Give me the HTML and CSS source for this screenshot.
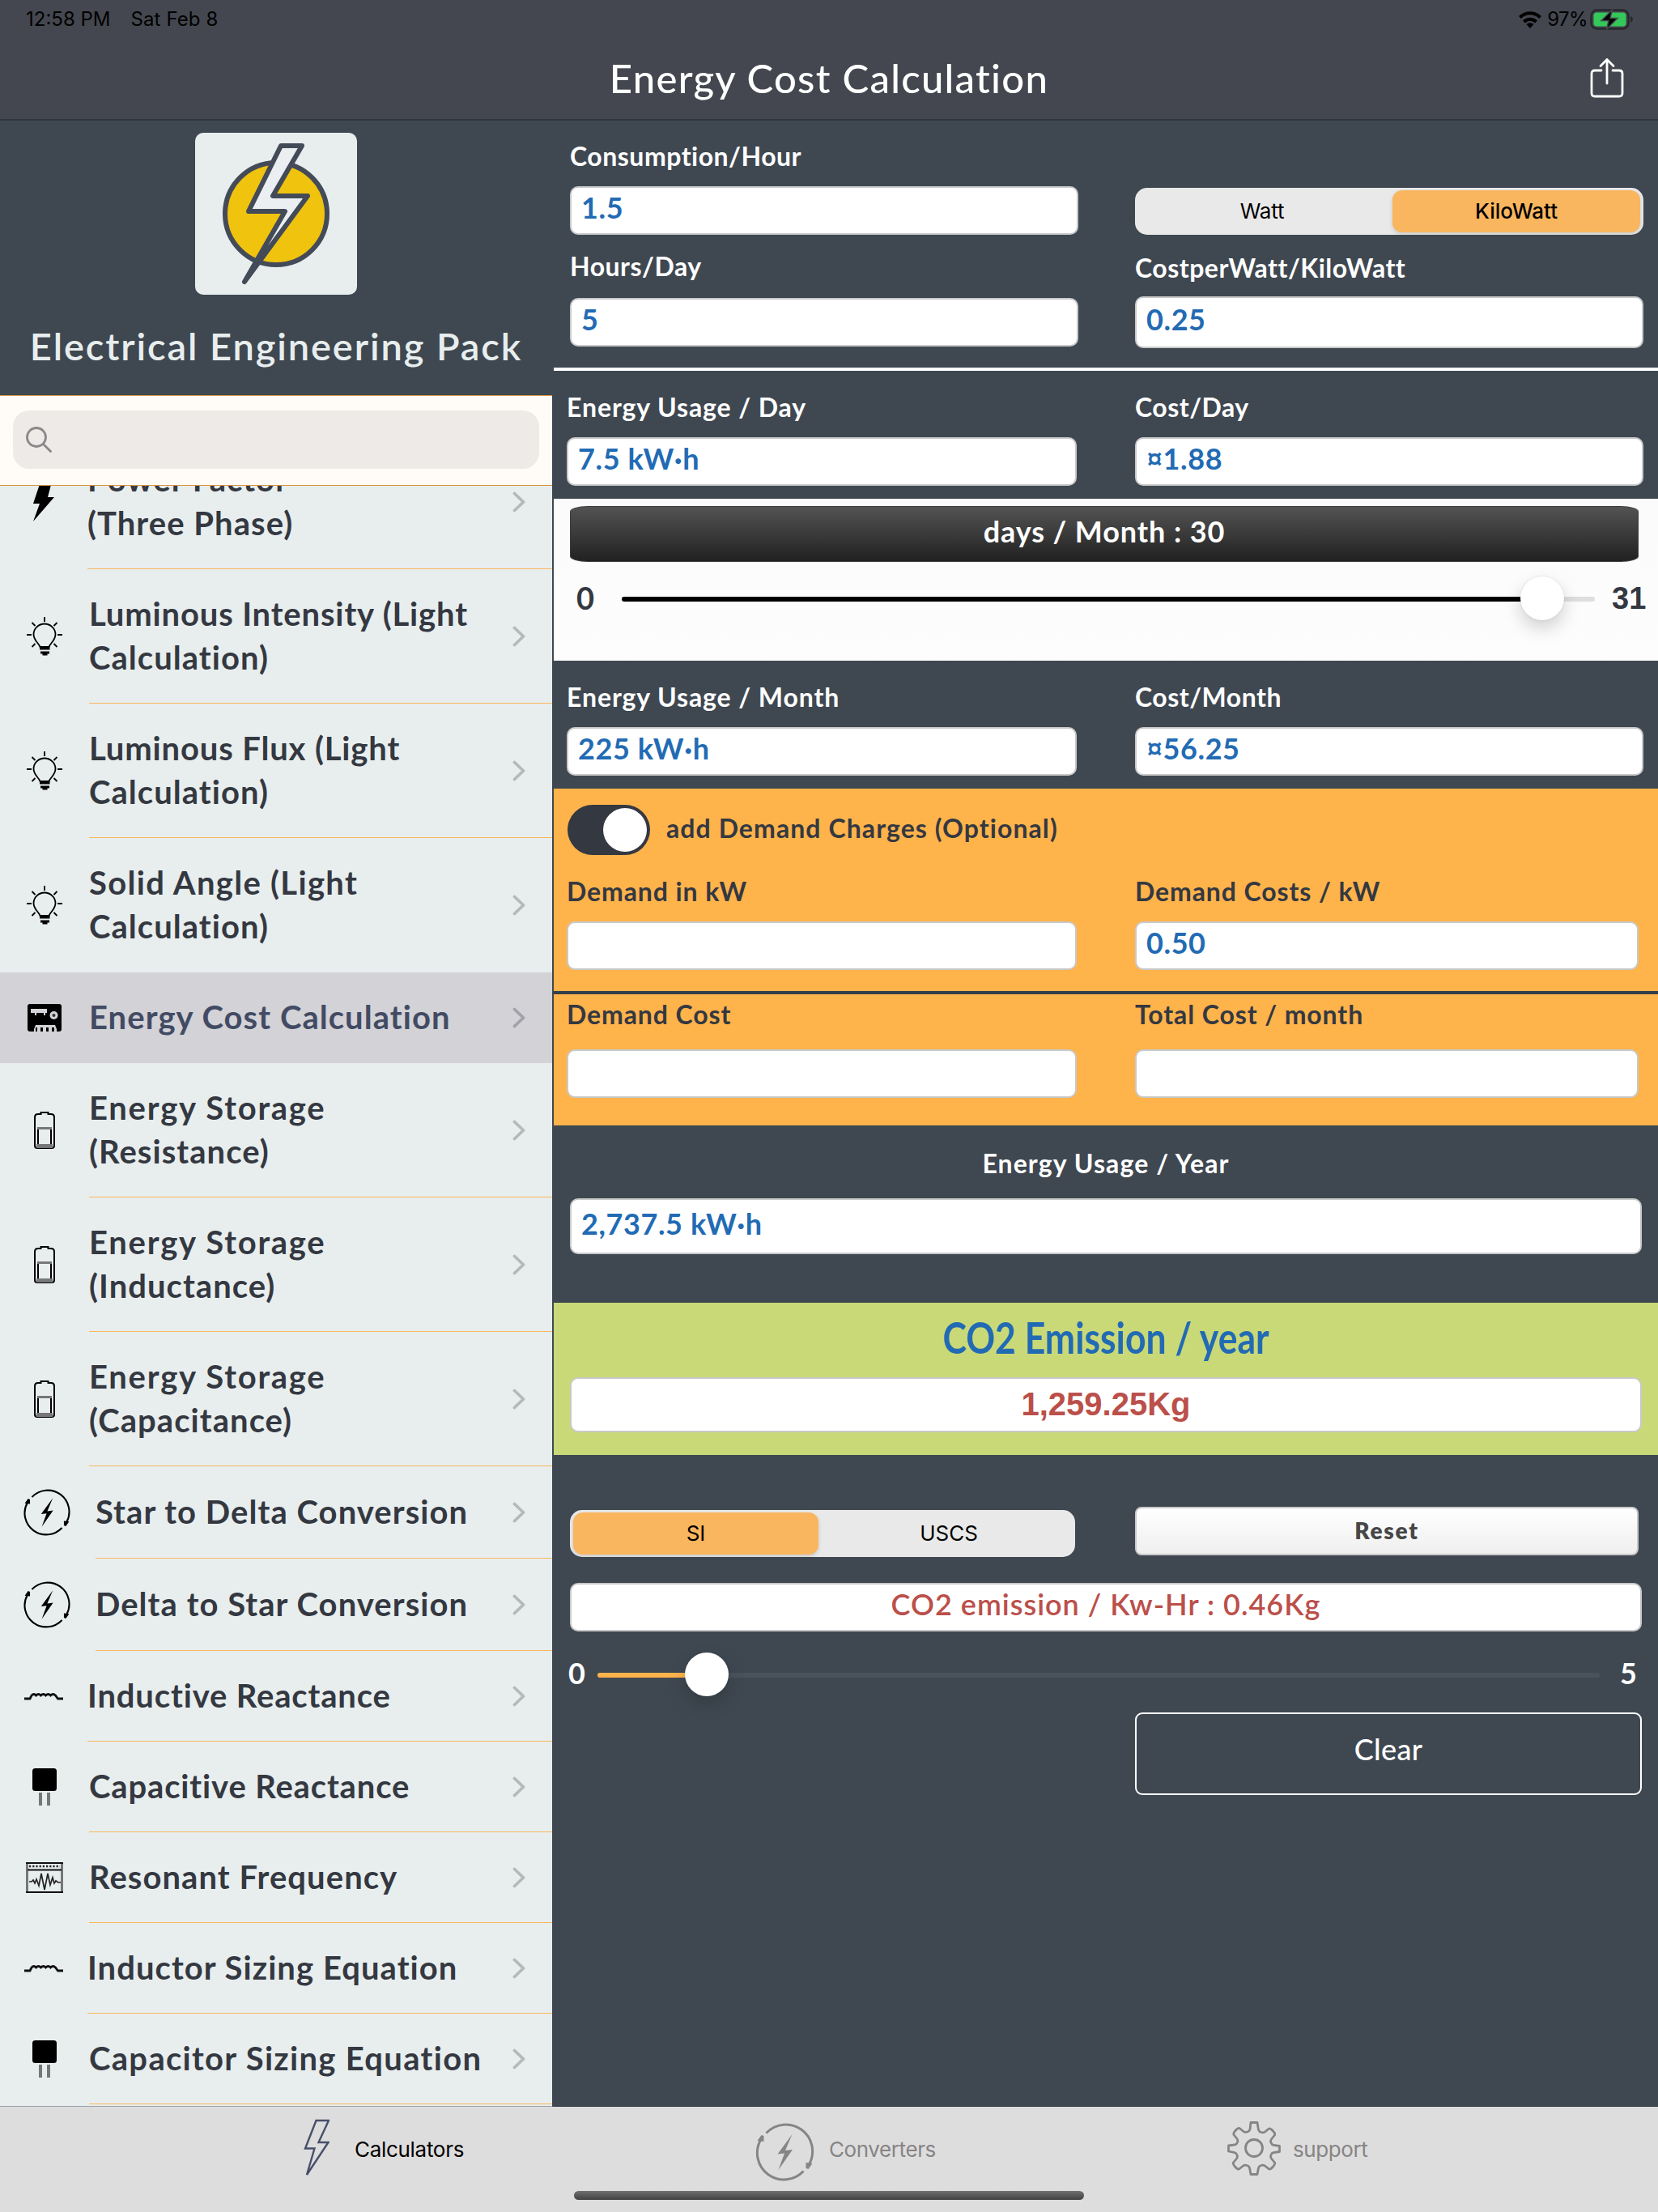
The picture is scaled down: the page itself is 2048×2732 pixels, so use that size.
FILE: index.html
```html
<!DOCTYPE html>
<html lang="en">
<head>
<meta charset="utf-8">
<title>Energy Cost Calculation</title>
<link rel="stylesheet" href="styles.css">
</head>
<body>
<svg class="defs" aria-hidden="true">
  <symbol id="bulb" viewBox="0 0 60 60">
    <g fill="none" stroke="#000" stroke-width="1.8">
      <path d="M30 6v6M8 28h6M46 28h6M14.5 13l4 4M45.500 13l-4 4M14.500 43l4-4M45.500 43l-4-4"/>
      <path d="M24.500 43c-1-4-8-8-8-15.500a13.500 13 0 0 1 27 0c0 7.500-7 11.500-8 15.500z"/>
    </g>
    <path d="M24 42.500h12.500v4H24zM25 48.500h11v3h-2.500v2h-6v-2H25z"/>
  </symbol>
  <symbol id="battery" viewBox="0 0 60 60">
    <path d="M18 14q0-4 4-4h3.500V8h9v2H38q4 0 4 4v35q0 3-3 3H21q-3 0-3-3z" fill="none" stroke="#000" stroke-width="2"/>
    <path d="M22 48V27h16v21" fill="none" stroke="#000" stroke-width="2"/>
    <path d="M21 26h18v3H21zM20 47h20v5H20z" fill="#777"/>
  </symbol>
  <symbol id="meter" viewBox="0 0 60 60">
    <rect x="9" y="13" width="42" height="34" rx="3"/>
    <path d="M13 19h20v5h-2v3h-2v-3h-9v3h-2v-3h-5z" fill="#d4d3d8"/>
    <circle cx="41.500" cy="27" r="5" fill="#d4d3d8"/><circle cx="41.500" cy="27" r="2" fill="#333"/>
    <path d="M17 47v-3l2-5h24l2 5v3h-3v-5h-3v5h-4v-5h-3v5h-4v-5h-3v5h-4v-5h-2v5z" fill="#d4d3d8"/>
  </symbol>
  <symbol id="cycle" viewBox="0 0 72 72">
    <g fill="none" stroke="currentColor" stroke-width="var(--w)">
      <path d="M13 12.500A33 33 0 0 1 66 51"/>
      <path d="M59 59.500A33 33 0 0 1 6 21"/>
    </g>
    <path d="M2 22l5-7 3 1v7zM70 50l-5 7-3-1v-7z" fill="currentColor"/>
    <path d="M45 14L27 38.500l8.500-1L28 58l17.500-25-9 1z" fill="currentColor"/>
  </symbol>
  <symbol id="coil" viewBox="0 0 60 60">
    <path d="M5 33h7l2-4q3-3 5.500 0 3-3 6 0 3-3 6 0 3-3 6 0 3-3 6 0l3 4H53" fill="none" stroke="#111" stroke-width="2.800"/>
  </symbol>
  <symbol id="capacitor" viewBox="0 0 60 60">
    <rect x="15" y="7" width="30" height="28" rx="3.500"/>
    <path d="M23 37h4v16h-4zM33 37h4v16h-4z" fill="#777"/>
  </symbol>
  <symbol id="scope" viewBox="0 0 60 60">
    <path d="M8.500 11v38M51.500 11v38" stroke="#777" stroke-width="3" fill="none"/>
    <path d="M7 12h46M7 48h46M9 20.500h42" stroke="#111" stroke-width="1.800" fill="none"/>
    <path d="M11 16h38" stroke="#222" stroke-width="2.400" stroke-dasharray="2.200 2" fill="none"/>
    <path d="M11 35h3l2-2 2 4 2-5 3 8 3-15 4 20 4-20 3 14 3-9 2 7 2-3 3 2h3" stroke="#222" stroke-width="1.700" fill="none"/>
  </symbol>
  <symbol id="bolt" viewBox="0 0 60 60">
    <path d="M25 5h14l-5 19h8L16 54l8-22h-8z"/>
  </symbol>
  <symbol id="chevron" viewBox="0 0 16 26">
    <path d="M2.500 2.500L13.500 13 2.500 23.500" fill="none" stroke="currentColor" stroke-width="3.800" stroke-linecap="round" stroke-linejoin="round"/>
  </symbol>
</svg>

<header class="topbar">
  <div class="status">
    <span class="status-time">12:58 PM</span>
    <span class="status-date">Sat Feb 8</span>
    <svg class="wifi" viewBox="0 0 28 22"><g fill="none" stroke="#000" stroke-width="4"><path d="M1.500 8.500a17.500 17.500 0 0 1 25 0"/><path d="M6.500 14a10.500 10.500 0 0 1 15 0"/></g><path d="M14 22l-4.500-5a6.500 6.500 0 0 1 9 0z"/></svg>
    <span class="status-level">97%</span>
    <svg class="charge" viewBox="0 0 54 26"><rect x="1.500" y="1.500" width="46" height="23" rx="7" fill="none" stroke="#26282d" stroke-width="2.400"/><rect x="4.500" y="4.500" width="40" height="17" rx="4" fill="#34c759"/><path d="M50 9q3 1.500 3 4t-3 4z" fill="#26282d"/><path d="M27.500 1L14 14.500h9L20.500 25 34 11.500h-9z" fill="#000" stroke="#44474f" stroke-width="1.500"/></svg>
  </div>
  <div class="titlebar">
    <h1 class="title">Energy Cost Calculation</h1>
    <svg class="share" viewBox="0 0 42 50"><g fill="none" stroke="#fff" stroke-width="2.800" stroke-linecap="round" stroke-linejoin="round"><path d="M14 16H6q-4 0-4 4v24q0 4 4 4h30q4 0 4-4V20q0-4-4-4h-8"/><path d="M21 32V2.500M13 10.500l8-8 8 8"/></g></svg>
  </div>
</header>

<div class="body">
  <aside class="sidebar">
    <div class="brand">
      <svg class="logo" viewBox="0 0 200 200"><rect width="200" height="200" rx="10" fill="#e8eeee"/><circle cx="100" cy="100" r="63" fill="#f0c30f" stroke="#444b58" stroke-width="6"/><path d="M106 16h26L96 78h43L61 184l50-87H66z" fill="#ebeff2" stroke="#444b58" stroke-width="6" stroke-linejoin="round"/></svg>
      <div class="brand-name">Electrical Engineering Pack</div>
    </div>
    <div class="search"><div class="search-box"><svg class="glass" viewBox="0 0 34 34"><g fill="none" stroke="#89888a" stroke-width="2.800" stroke-linecap="round"><circle cx="14" cy="14" r="11.500"/><path d="M22.500 22.500l9 9"/></g></svg></div></div>
    <ul class="list">
      <li class="row tall first"><svg class="icon"><use href="#bolt"/></svg><div class="cell out"><p>Power Factor<br>(Three Phase)</p><svg class="chev"><use href="#chevron"/></svg></div></li>
      <li class="row tall"><svg class="icon"><use href="#bulb"/></svg><div class="cell"><p><span class="tight">Luminous Intensity (Light</span><br>Calculation)</p><svg class="chev"><use href="#chevron"/></svg></div></li>
      <li class="row tall"><svg class="icon"><use href="#bulb"/></svg><div class="cell"><p><span class="tight">Luminous Flux (Light</span><br>Calculation)</p><svg class="chev"><use href="#chevron"/></svg></div></li>
      <li class="row tall"><svg class="icon"><use href="#bulb"/></svg><div class="cell plain"><p><span class="loose">Solid Angle (Light</span><br>Calculation)</p><svg class="chev"><use href="#chevron"/></svg></div></li>
      <li class="row selected"><svg class="icon"><use href="#meter"/></svg><div class="cell plain"><p>Energy Cost Calculation</p><svg class="chev"><use href="#chevron"/></svg></div></li>
      <li class="row tall"><svg class="icon"><use href="#battery"/></svg><div class="cell"><p><span class="wide">Energy Storage</span><br>(Resistance)</p><svg class="chev"><use href="#chevron"/></svg></div></li>
      <li class="row tall"><svg class="icon"><use href="#battery"/></svg><div class="cell"><p><span class="wide">Energy Storage</span><br>(Inductance)</p><svg class="chev"><use href="#chevron"/></svg></div></li>
      <li class="row tall"><svg class="icon"><use href="#battery"/></svg><div class="cell"><p><span class="wide">Energy Storage</span><br>(Capacitance)</p><svg class="chev"><use href="#chevron"/></svg></div></li>
      <li class="row mid"><svg class="icon round"><use href="#cycle"/></svg><div class="cell"><p>Star to Delta Conversion</p><svg class="chev"><use href="#chevron"/></svg></div></li>
      <li class="row mid"><svg class="icon round"><use href="#cycle"/></svg><div class="cell"><p>Delta to Star Conversion</p><svg class="chev"><use href="#chevron"/></svg></div></li>
      <li class="row"><svg class="icon"><use href="#coil"/></svg><div class="cell out"><p><span class="tight">Inductive Reactance</span></p><svg class="chev"><use href="#chevron"/></svg></div></li>
      <li class="row"><svg class="icon"><use href="#capacitor"/></svg><div class="cell"><p><span class="tight">Capacitive Reactance</span></p><svg class="chev"><use href="#chevron"/></svg></div></li>
      <li class="row"><svg class="icon"><use href="#scope"/></svg><div class="cell"><p>Resonant Frequency</p><svg class="chev"><use href="#chevron"/></svg></div></li>
      <li class="row"><svg class="icon"><use href="#coil"/></svg><div class="cell out"><p>Inductor Sizing Equation</p><svg class="chev"><use href="#chevron"/></svg></div></li>
      <li class="row"><svg class="icon"><use href="#capacitor"/></svg><div class="cell"><p><span class="loose">Capacitor Sizing Equation</span></p><svg class="chev"><use href="#chevron"/></svg></div></li>
    </ul>
  </aside>

  <main class="detail">
    <section class="pair inputs">
      <div class="left inset">
        <div class="label snug">Consumption/Hour</div>
        <div class="box">1.5</div>
        <div class="label second snug">Hours/Day</div>
        <div class="box hours">5</div>
      </div>
      <div class="right">
        <div class="seg unit"><div class="opt">Watt</div><div class="opt on">KiloWatt</div></div>
        <div class="label cost-label snug">CostperWatt/KiloWatt</div>
        <div class="box cost">0.25</div>
      </div>
    </section>
    <section class="pair day">
      <div class="left"><div class="label">Energy Usage / Day</div><div class="box">7.5 kW·h</div></div>
      <div class="right"><div class="label snug">Cost/Day</div><div class="box"><span class="currency">¤</span>1.88</div></div>
    </section>
    <section class="days">
      <div class="days-button">days / Month : 30</div>
      <div class="slider days-slider"><span class="min">0</span><div class="track"><div class="fill" style="width:94.600%"></div><div class="thumb" style="left:94.600%"></div></div><span class="max">31</span></div>
    </section>
    <section class="pair month">
      <div class="left"><div class="label">Energy Usage / Month</div><div class="box">225 kW·h</div></div>
      <div class="right"><div class="label snug">Cost/Month</div><div class="box"><span class="currency">¤</span>56.25</div></div>
    </section>
    <section class="demand">
      <div class="toggle-row"><div class="toggle"><div class="knob"></div></div><div class="label">add Demand Charges (Optional)</div></div>
      <div class="pair">
        <div class="left"><div class="label">Demand in kW</div><div class="box"></div></div>
        <div class="right narrow"><div class="label">Demand Costs / kW</div><div class="box">0.50</div></div>
      </div>
    </section>
    <section class="demand total">
      <div class="pair">
        <div class="left"><div class="label">Demand Cost</div><div class="box"></div></div>
        <div class="right narrow"><div class="label">Total Cost / month</div><div class="box"></div></div>
      </div>
    </section>
    <section class="year"><div class="label">Energy Usage / Year</div><div class="box">2,737.5 kW·h</div></section>
    <section class="co2"><div class="co2-title">CO2 Emission / year</div><div class="box">1,259.25Kg</div></section>
    <section class="emission">
      <div class="controls">
        <div class="seg system"><div class="opt on">SI</div><div class="opt">USCS</div></div>
        <div class="reset">Reset</div>
      </div>
      <div class="box rate">CO2 emission / Kw-Hr : 0.46Kg</div>
      <div class="slider rate-slider"><span class="min">0</span><div class="track"><div class="fill" style="width:10.900%"></div><div class="thumb" style="left:10.900%"></div></div><span class="max">5</span></div>
      <div class="clear">Clear</div>
    </section>
  </main>
</div>

<footer class="tabbar">
  <nav class="tabs">
    <div class="tab calc"><svg viewBox="0 0 32 72"><path d="M15.500 2H31L18.500 29H30.500L4 69 13.500 36.500H2z" fill="none" stroke="#47506a" stroke-width="2.400"/></svg><span>Calculators</span></div>
    <div class="tab conv"><svg viewBox="0 0 72 72"><use href="#cycle"/></svg><span>Converters</span></div>
    <div class="tab supp"><svg viewBox="0 0 66 66"><g fill="none" stroke="#858586" stroke-width="2.800" stroke-linejoin="round"><circle cx="33" cy="33" r="10.500"/><path d="M29 1.500h8l1.500 9q1 2.500 3 3 3 1 5-.5l5-4q2-.5 5 3 3 3 2 5l-4 5q-1.500 2-.5 4.500 1 2.500 3 2.800l7.500 1.200v7l-7.500 1.200q-2 .3-3 2.800-1 2.500.5 4.500l4 5q1 2-2 5-3 3.500-5 3l-5-4q-2-1.500-5-.5-2 .5-3 3l-1.500 8h-8l-1.500-8q-1-2.500-3-3-3-1-5 .5l-5 4q-2 .5-5-3-3-3-2-5l4-5q1.500-2 .5-4.500-1-2.500-3-2.800L1.500 37v-7l8-1.200q2-.3 3-2.800 1-2.500-.5-4.500l-4-5q-1-2 2-5 3-3.500 5-3l5 4q2 1.500 5 .5 2-.5 3-3z"/></g></svg><span>support</span></div>
  </nav>
  <div class="home"></div>
</footer>
</body>
</html>
```
FILE: styles.css
```css
* { box-sizing: border-box; }
body {
  margin: 0;
  width: 2048px;
  height: 2732px;
  overflow: hidden;
  display: flex;
  flex-direction: column;
  background: #3f4851;
  font-family: Lato, sans-serif;
}
.defs { position: absolute; width: 0; height: 0; }

/* top bar */
.topbar { height: 149px; background: #44474f; border-bottom: 2px solid #30373f; }
.status {
  height: 48px;
  display: flex;
  align-items: center;
  padding: 0 30px 0 32px;
  font: 400 24px/48px Inter, sans-serif;
  color: #000;
}
.status-date { margin-left: 25px; flex: 1; letter-spacing: .100px; }
.wifi { width: 28px; height: 22px; }
.status-level { margin: 0 3px 0 7px; letter-spacing: -.6px; }
.charge { width: 54px; height: 26px; }
.titlebar { height: 99px; display: grid; grid-template-columns: 1fr auto 1fr; align-items: center; }
.title {
  grid-column: 2;
  margin: 0 0 4px;
  font-size: 49px;
  line-height: 60px;
  font-weight: 500;
  letter-spacing: 1.300px;
  color: #fff;
}
.share { width: 42px; height: 50px; justify-self: end; margin: 0 42px 3px 0; }

/* layout */
.body { height: 2453px; display: flex; background: #3f4851; }
.sidebar { width: 682px; display: flex; flex-direction: column; background: #e8eeee; overflow: hidden; border-bottom: 1px solid #9ba3a6; }
.detail { margin-left: 2px; width: 1364px; display: flex; flex-direction: column; border-bottom: 1px solid #30373f; }

/* sidebar */
.brand { height: 339px; flex: none; padding-top: 15px; background: #3f4851; display: flex; flex-direction: column; align-items: center; }
.logo { width: 200px; height: 200px; }
.brand-name { margin-top: 33px; font-size: 47px; line-height: 60px; font-weight: 600; letter-spacing: 1.900px; color: #e8eeee; white-space: nowrap; }
.search { height: 112px; flex: none; padding: 18px 16px; background: #fffcf8; border-top: 1px solid #d59443; border-bottom: 1px solid #d59443; }
.search-box { height: 72px; border-radius: 20px; background: #eeeae7; display: flex; align-items: center; padding-left: 15px; }
.glass { width: 34px; height: 34px; }
.list { flex: 1; min-height: 0; overflow: hidden; margin: 0; padding: 0; list-style: none; }
.row { height: 112px; display: flex; align-items: center; color: #343841; }
.row.tall { height: 166px; }
.row.mid { height: 114px; }
.row.first { margin-top: -63px; }
.row.selected { background: #d3d2d7; color: #424b63; }
.icon { width: 60px; height: 60px; margin: 0 25px; flex: none; overflow: visible; }
.icon.round { --w: 2.600; width: 58px; height: 58px; margin: 0 31px 0 29px; color: #000; }
.cell {
  flex: 1;
  height: 100%;
  display: flex;
  align-items: center;
  justify-content: space-between;
  padding-right: 33px;
  border-bottom: 1px solid #fab75f;
  font-size: 40px;
  line-height: 54px;
  font-weight: 700;
  letter-spacing: 1.050px;
  white-space: nowrap;
}
.cell.plain { border-color: transparent; }
.cell.out { margin-left: -2px; }
.cell p { margin: 0; padding-bottom: 2px; }
.cell .tight { letter-spacing: .850px; }
.cell .loose { letter-spacing: 1.300px; }
.cell .wide { letter-spacing: 1.750px; }
.chev { width: 16px; height: 26px; color: #b5b9ba; }
.selected .chev { color: #a3a2a8; }

/* form pieces */
.pair { display: flex; }
.left { width: 630px; margin-left: 16px; }
.left.inset { width: 628px; margin: 0 2px 0 20px; }
.right { width: 628px; margin-left: 72px; }
.left.inset + .right { margin-left: 68px; }
.right.narrow { width: 622px; }
.label { height: 40px; margin-bottom: 18px; font-size: 32px; line-height: 42px; font-weight: 700; letter-spacing: .900px; color: #fff; white-space: nowrap; }
.label.snug { letter-spacing: .500px; }
.box {
  height: 60px;
  border: 2px solid #c9c9c9;
  border-radius: 10px;
  background: #fff;
  padding-left: 12px;
  font-size: 36px;
  line-height: 49px;
  font-weight: 700;
  letter-spacing: .600px;
  color: #226bb4;
  white-space: nowrap;
}
.currency { font: 600 36px/40px "Noto Sans", sans-serif; letter-spacing: 0; }
.seg { height: 58px; border-radius: 15px; background: #e9e9e9; padding: 3px 4px; display: flex; font: 400 26px/52px Inter, sans-serif; color: #000; text-align: center; }
.opt { flex: 1; }
.opt.on { border-radius: 12px; background: #fab65e; box-shadow: 0 2px 5px rgba(0, 0, 0, .15); }

.inputs { height: 309px; padding-top: 23px; border-bottom: 4px solid #fff; }
.label.second { margin: 18px 0 20px; }
.unit { margin-top: 60px; }
.unit .opt:first-child { padding-right: 8px; letter-spacing: -.200px; }
.unit .on { flex: 0 0 306px; font-weight: 500; }
.label.cost-label { margin: 20px 0 16px; }
.box.cost { height: 64px; line-height: 53px; }
.day { height: 158px; padding-top: 24px; }

.days { height: 200px; padding-top: 9px; background: linear-gradient(#fbfbfb, #fdfdfd); }
.days-button {
  height: 69px;
  width: 1320px;
  margin-left: 20px;
  border-radius: 22px / 7px;
  border: 1px solid #3c3c3c;
  background: linear-gradient(#535353, #212121);
  color: #fff;
  text-align: center;
  font-size: 36px;
  line-height: 61px;
  font-weight: 700;
  letter-spacing: .900px;
}
.slider { display: flex; align-items: center; height: 60px; font-weight: 700; }
.track { position: relative; height: 6px; border-radius: 3px; }
.fill { height: 6px; border-radius: 3px; }
.thumb { position: absolute; top: -25px; width: 54px; height: 54px; margin-left: -27px; border-radius: 50%; background: #fff; box-shadow: 0 10px 22px rgba(0, 0, 0, .18), 0 0 3px rgba(0, 0, 0, .1); }
.days-slider { margin-top: 16px; color: #343841; font-size: 38px; line-height: 50px; }
.days-slider .min { width: 56px; margin-left: 28px; padding-bottom: 4px; }
.days-slider .track { width: 1202px; background: #dedede; }
.days-slider .fill { background: #000; }
.days-slider .max { margin-left: 21px; padding-bottom: 3px; font-family: "Liberation Sans", sans-serif; }

.month { height: 158px; padding-top: 24px; }
.demand { height: 250px; padding-top: 20px; background: #ffb34b; }
.demand .label { color: #343841; }
.toggle-row { display: flex; height: 86px; }
.toggle { width: 102px; height: 62px; margin: 0 20px 0 17px; padding: 4px; border-radius: 31px; background: #343841; display: flex; justify-content: flex-end; }
.toggle-row .label { margin-top: 8px; letter-spacing: 1.080px; }
.knob { width: 54px; height: 54px; border-radius: 50%; background: #fff; }
.demand.total { height: 166px; padding-top: 4px; border-top: 4px solid #343f49; }
.total .label { margin-bottom: 24px; }

.year { height: 219px; padding: 26px 20px 0; }
.year .label { text-align: center; margin-bottom: 24px; letter-spacing: 1.100px; }
.year .box { height: 69px; line-height: 58px; }

.co2 { height: 188px; padding: 13px 20px 0; background: #c9d978; text-align: center; }
.co2-title { height: 60px; margin-bottom: 19px; font-size: 53px; line-height: 60px; font-weight: 700; color: #226bb4; transform: scaleX(.84); }
.co2 .box { height: 68px; font: 700 40px/63px "Liberation Sans", sans-serif; color: #bb4f4a; letter-spacing: 0; padding: 0; }

.emission { padding: 64px 20px 0; }
.controls { display: flex; height: 94px; }
.system { width: 624px; margin-top: 4px; }
.system .on { flex: 0 0 303px; }
.system .opt:last-child { padding-left: 9px; }
.reset { width: 622px; height: 60px; margin-left: 74px; border: 2px solid #c9c9c9; border-radius: 8px; background: linear-gradient(#fff, #efefef); text-align: center; font-size: 28px; line-height: 55px; font-weight: 800; letter-spacing: 1.800px; color: #474747; }
.rate { text-align: center; font-weight: 600; letter-spacing: 1px; color: #bb4f4a; padding: 0; }
.rate-slider { margin-top: 24px; color: #fff; font-size: 36px; line-height: 50px; }
.rate-slider .min { width: 22px; margin: 0 14px 6px -2px; }
.rate-slider .track { width: 1238px; background: #49525b; }
.rate-slider .fill { background: #ffb34b; }
.rate-slider .max { margin: 0 0 6px 25px; }
.clear { width: 626px; height: 102px; margin: 16px 0 0 698px; border: 2px solid #fff; border-radius: 9px; text-align: center; font-size: 36px; line-height: 86px; font-weight: 500; letter-spacing: .300px; color: #fff; }

/* tab bar */
.tabbar { height: 130px; background: #dedddd; }
.tabs { height: 102px; display: flex; font: 400 26px/34px Inter, sans-serif; letter-spacing: -.400px; color: #858586; }
.tab { display: flex; align-items: center; }
.tab.calc { margin-left: 375px; width: 557px; color: #000; letter-spacing: -.300px; }
.calc svg { width: 32px; height: 72px; margin-right: 31px; }
.tab.conv { width: 584px; }
.conv svg { --w: 3; width: 75px; height: 72px; margin: 10px 17px 0 0; }
.supp svg { width: 66px; height: 68px; margin-right: 15px; }
.tab span { padding-top: 3px; }
.home { width: 630px; height: 11px; margin: 2px auto 0; border-radius: 6px; background: linear-gradient(#707070, #414141); }
```
